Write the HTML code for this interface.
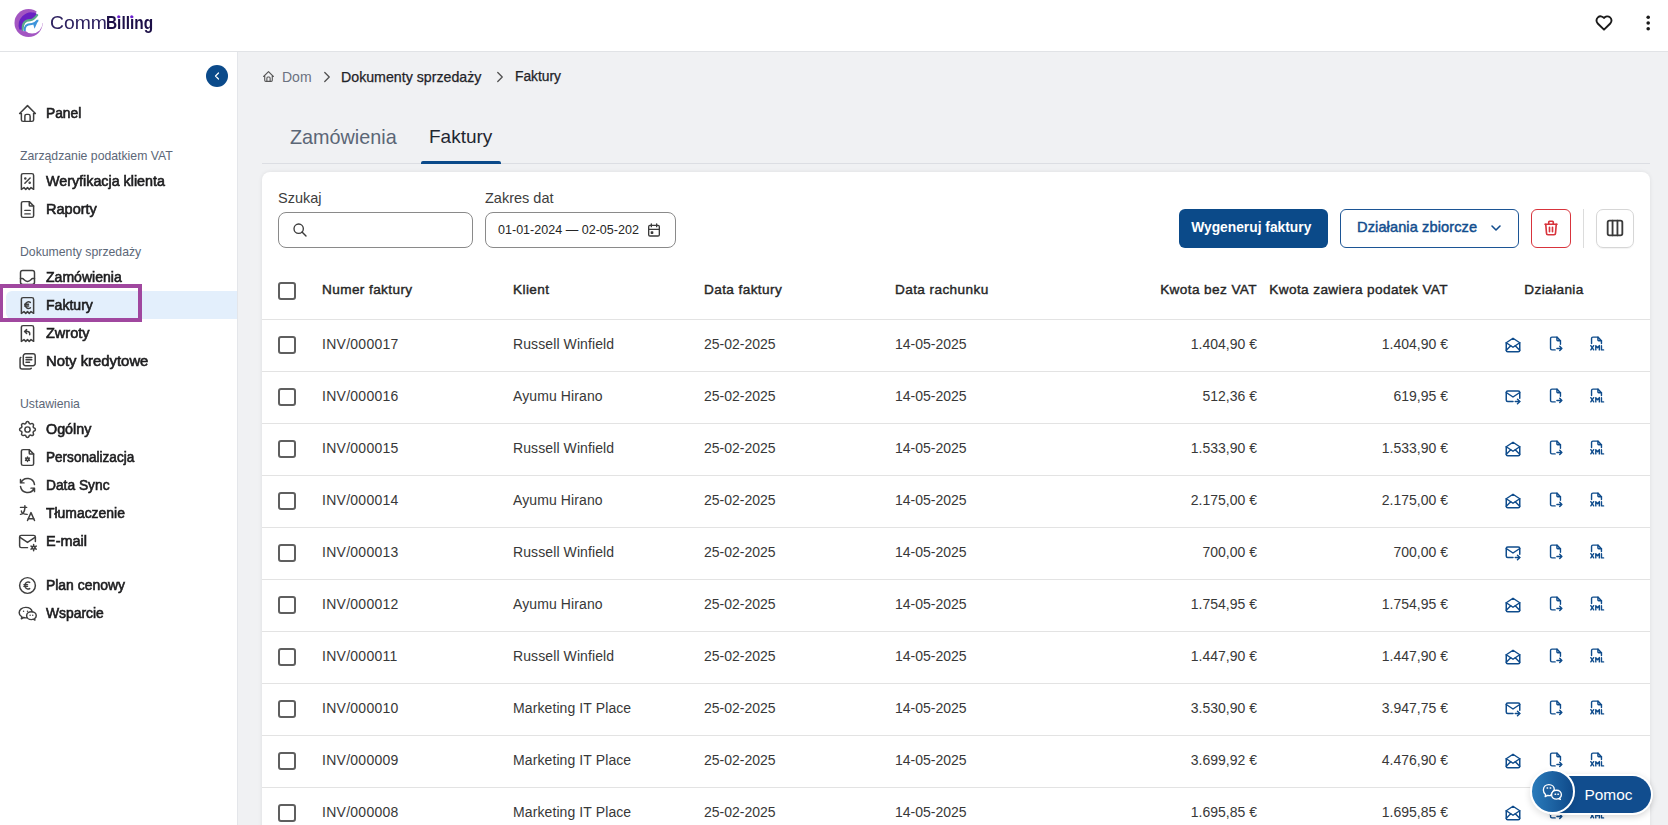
<!DOCTYPE html><html><head><meta charset="utf-8"><style>
*{box-sizing:border-box;margin:0;padding:0}
html,body{width:1668px;height:825px;overflow:hidden}
body{background:#f0f1f3;font-family:"Liberation Sans",sans-serif;position:relative;color:#1f2937}
.a{position:absolute;white-space:nowrap}
svg{display:block;position:absolute}
.nav{left:45.8px;font-size:14px;color:#1d1d1f;-webkit-text-stroke:0.6px #1d1d1f;line-height:16px;height:16px;transform-origin:0 50%}
.sec{left:20px;font-size:12.25px;color:#5c6778;line-height:14px;height:14px}
.th{font-size:13.6px;letter-spacing:0.4px;color:#262626;-webkit-text-stroke:0.4px #262626;line-height:16px;top:282px}
.td{font-size:14px;color:#383838;line-height:16px}
.cb{width:18px;height:18px;border:2px solid #5f5f5f;border-radius:3px;left:278px}
.sep{left:262px;width:1388px;height:1px;background:#e3e3e3}
</style></head><body>
<div class="a" style="left:0;top:0;width:1668px;height:51px;background:#fff"></div>
<div class="a" style="left:0;top:51px;width:1668px;height:1px;background:#e1e3e6"></div>
<svg style="left:10px;top:5px" width="38" height="36" viewBox="0 0 871 825">
<defs><mask id="m1" maskUnits="userSpaceOnUse" x="0" y="0" width="871" height="825"><circle cx="425" cy="412" r="322" fill="#fff"/><circle cx="507" cy="414" r="238" fill="#000"/><polygon points="507,414 610,150 680,-30 900,-30 900,414" fill="#000"/></mask></defs>
<rect width="871" height="825" fill="#a356c2" mask="url(#m1)"/>
<path d="M598,188 A295,295 0 0,0 215,560 L295,570 C285,420 330,350 470,345 C530,342 570,300 622,232 Z" fill="#6a21c3"/>
<path d="M295,570 C285,420 330,350 470,345 C530,342 570,300 622,232" fill="none" stroke="#5ba98c" stroke-width="52" stroke-linecap="round"/>
<path d="M338,600 C330,480 370,440 500,435 C550,432 590,405 640,350" fill="none" stroke="#fff" stroke-width="60"/>
<polygon points="520,425 672,322 558,560" fill="#fff"/>
<path d="M338,600 C330,480 370,440 500,435 C550,432 590,405 640,350" fill="none" stroke="#3e95da" stroke-width="46"/>
<polygon points="530,432 658,335 562,545" fill="#3e95da"/>
</svg>
<div class="a" style="left:50px;top:12px;font-size:17.6px;line-height:22px;color:#2e2260;transform-origin:0 0;transform:scaleX(1.1)">Comm</div>
<div class="a" style="left:105.6px;top:12px;font-size:17.6px;line-height:22px;color:#1c0f47;font-weight:bold;transform-origin:0 0;transform:scaleX(0.875)">Billing</div>
<svg style="left:112px;top:12px" width="26" height="9" viewBox="112 12 26 9"><rect x="117.3" y="15.2" width="2.9" height="3" fill="#fff"/><rect x="130.3" y="15.2" width="2.9" height="3" fill="#fff"/><circle cx="118.7" cy="16.8" r="1.55" fill="#6a1fd0"/><circle cx="131.7" cy="16.8" r="1.55" fill="#6a1fd0"/></svg>
<svg style="left:1594px;top:12.7px" width="20" height="20" viewBox="0 0 24 24" fill="none" stroke="#1a1a1a" stroke-width="2.3" stroke-linecap="round" stroke-linejoin="round"><path d="M19.5 12.572l-7.5 7.428-7.5-7.428a5 5 0 1 1 7.5-6.566 5 5 0 1 1 7.5 6.572"/></svg>
<svg style="left:1640px;top:10px" width="16" height="26" viewBox="1640 10 16 26"><circle cx="1648.2" cy="17.2" r="1.8" fill="#1a1a1a"/><circle cx="1648.2" cy="23" r="1.8" fill="#1a1a1a"/><circle cx="1648.2" cy="28.8" r="1.8" fill="#1a1a1a"/></svg>
<div class="a" style="left:0;top:52px;width:237px;height:773px;background:#fff"></div>
<div class="a" style="left:237px;top:52px;width:1px;height:773px;background:#e4e6ea"></div>
<div class="a" style="left:206px;top:65px;width:22px;height:22px;border-radius:11px;background:#0b4a8a"></div>
<svg style="left:211px;top:70px" width="12" height="12" viewBox="0 0 24 24" fill="none" stroke="#fff" stroke-width="2.4" stroke-linecap="round" stroke-linejoin="round"><path d="M15 6l-6 6 6 6"/></svg>
<div class="a" style="left:6px;top:290.6px;width:231px;height:28.6px;background:#e3effc;border-radius:6px 0 0 6px"></div>
<div class="a nav" style="top:104.7px;transform:scaleX(0.985)">Panel</div>
<svg style="left:17px;top:102.5px" width="21" height="21" viewBox="0 0 24 24" fill="none" stroke="#3f3f3f" stroke-width="1.7" stroke-linecap="round" stroke-linejoin="round"><path d="M5 12H3l9-9 9 9h-2"/><path d="M5 12v7a2 2 0 0 0 2 2h10a2 2 0 0 0 2-2v-7"/><path d="M9 21v-6a2 2 0 0 1 2-2h2a2 2 0 0 1 2 2v6"/></svg>
<div class="a sec" style="top:149px">Zarządzanie podatkiem VAT</div>
<div class="a nav" style="top:172.7px;transform:scaleX(1.021)">Weryfikacja klienta</div>
<svg style="left:17px;top:170.5px" width="21" height="21" viewBox="0 0 24 24" fill="none" stroke="#3f3f3f" stroke-width="1.7" stroke-linecap="round" stroke-linejoin="round"><path d="M5 21V5a2 2 0 0 1 2-2h10a2 2 0 0 1 2 2v16l-3-2-2 2-2-2-2 2-2-2-3 2"/><path d="M9 14l6-6"/><circle cx="9.5" cy="8.5" r=".6" fill="currentColor"/><circle cx="14.5" cy="13.5" r=".6"/></svg>
<div class="a nav" style="top:200.7px;transform:scaleX(1.037)">Raporty</div>
<svg style="left:17px;top:198.5px" width="21" height="21" viewBox="0 0 24 24" fill="none" stroke="#3f3f3f" stroke-width="1.7" stroke-linecap="round" stroke-linejoin="round"><path d="M14 3v4a1 1 0 0 0 1 1h4"/><path d="M17 21H7a2 2 0 0 1-2-2V5a2 2 0 0 1 2-2h7l5 5v11a2 2 0 0 1-2 2z"/><path d="M9 17h6"/><path d="M9 13h6"/></svg>
<div class="a sec" style="top:245px">Dokumenty sprzedaży</div>
<div class="a nav" style="top:268.7px;transform:scaleX(1.003)">Zamówienia</div>
<svg style="left:17px;top:266.5px" width="21" height="21" viewBox="0 0 24 24" fill="none" stroke="#3f3f3f" stroke-width="1.7" stroke-linecap="round" stroke-linejoin="round"><path d="M4 6.5a2.5 2.5 0 0 1 2.5-2.5h11a2.5 2.5 0 0 1 2.5 2.5v11a2.5 2.5 0 0 1-2.5 2.5h-11a2.5 2.5 0 0 1-2.5-2.5z"/><path d="M4 13.2h2.2c1.6 0 2 3.3 5.8 3.3s4.2-3.3 5.8-3.3H20"/></svg>
<div class="a nav" style="top:296.7px;transform:scaleX(1.004)">Faktury</div>
<svg style="left:17px;top:294.5px" width="21" height="21" viewBox="0 0 24 24" fill="none" stroke="#3f3f3f" stroke-width="1.7" stroke-linecap="round" stroke-linejoin="round"><path d="M5 21V5a2 2 0 0 1 2-2h10a2 2 0 0 1 2 2v16l-3-2-2 2-2-2-2 2-2-2-3 2"/><path d="M15.3 8.4a3.7 3.7 0 1 0 0 6.2"/><path d="M8.8 10.6h4.4M8.8 12.6h4.4"/></svg>
<div class="a nav" style="top:324.7px;transform:scaleX(1.036)">Zwroty</div>
<svg style="left:17px;top:322.5px" width="21" height="21" viewBox="0 0 24 24" fill="none" stroke="#3f3f3f" stroke-width="1.7" stroke-linecap="round" stroke-linejoin="round"><path d="M5 21V5a2 2 0 0 1 2-2h10a2 2 0 0 1 2 2v16l-3-2-2 2-2-2-2 2-2-2-3 2"/><path d="M14.5 13.5V12a2.2 2.2 0 0 0-2.2-2.2H9m2-2.2L8.6 9.8l2.4 2.2"/></svg>
<div class="a nav" style="top:352.7px;transform:scaleX(1.061)">Noty kredytowe</div>
<svg style="left:17px;top:350.5px" width="21" height="21" viewBox="0 0 24 24" fill="none" stroke="#3f3f3f" stroke-width="1.7" stroke-linecap="round" stroke-linejoin="round"><path d="M7.2 5.7a2.5 2.5 0 0 1 2.5-2.5h8.6a2.5 2.5 0 0 1 2.5 2.5v8.6a2.5 2.5 0 0 1-2.5 2.5H9.7a2.5 2.5 0 0 1-2.5-2.5z"/><path d="M4.3 7.4C3.7 7.8 3.5 8.3 3.5 9v9.3a2.3 2.3 0 0 0 2.3 2.3h8.8c.8 0 1.3-.3 1.7-.8"/><path d="M10.3 7.4h6.6M10.3 10.1h6.6M10.3 12.8h4"/></svg>
<div class="a sec" style="top:397px">Ustawienia</div>
<div class="a nav" style="top:420.7px;transform:scaleX(1.022)">Ogólny</div>
<svg style="left:17px;top:418.5px" width="21" height="21" viewBox="0 0 24 24" fill="none" stroke="#3f3f3f" stroke-width="1.7" stroke-linecap="round" stroke-linejoin="round"><path d="M10.3 4.3c.4-1.8 3-1.8 3.4 0a1.7 1.7 0 0 0 2.6 1.1c1.5-.9 3.3.8 2.4 2.4a1.7 1.7 0 0 0 1 2.5c1.8.4 1.8 3 0 3.4a1.7 1.7 0 0 0-1 2.6c.9 1.5-.9 3.3-2.4 2.4a1.7 1.7 0 0 0-2.6 1c-.4 1.8-3 1.8-3.4 0a1.7 1.7 0 0 0-2.5-1c-1.6.9-3.3-.9-2.4-2.4a1.7 1.7 0 0 0-1.1-2.6c-1.8-.4-1.8-3 0-3.4a1.7 1.7 0 0 0 1.1-2.5c-.9-1.6.8-3.3 2.4-2.4 1 .6 2.3.1 2.5-1.1z"/><circle cx="12" cy="12" r="3"/></svg>
<div class="a nav" style="top:448.7px;transform:scaleX(0.969)">Personalizacja</div>
<svg style="left:17px;top:446.5px" width="21" height="21" viewBox="0 0 24 24" fill="none" stroke="#3f3f3f" stroke-width="1.7" stroke-linecap="round" stroke-linejoin="round"><path d="M14 3v4a1 1 0 0 0 1 1h4"/><path d="M17 21H7a2 2 0 0 1-2-2V5a2 2 0 0 1 2-2h7l5 5v11a2 2 0 0 1-2 2z"/><circle cx="12" cy="14" r="1.5"/><path d="M12 11.5v1M12 15.5v1M14.2 12.7l-.9.5M10.7 14.8l-.9.5M9.8 12.7l.9.5M13.3 14.8l.9.5"/></svg>
<div class="a nav" style="top:476.7px;transform:scaleX(0.984)">Data Sync</div>
<svg style="left:17px;top:474.5px" width="21" height="21" viewBox="0 0 24 24" fill="none" stroke="#3f3f3f" stroke-width="1.7" stroke-linecap="round" stroke-linejoin="round"><path d="M20 11A8.1 8.1 0 0 0 4.5 9M4 5v4h4"/><path d="M4 13a8.1 8.1 0 0 0 15.5 2m.5 4v-4h-4"/></svg>
<div class="a nav" style="top:504.7px;transform:scaleX(0.994)">Tłumaczenie</div>
<svg style="left:17px;top:502.5px" width="21" height="21" viewBox="0 0 24 24" fill="none" stroke="#3f3f3f" stroke-width="1.7" stroke-linecap="round" stroke-linejoin="round"><path d="M4 5h7"/><path d="M9 3v2c0 4.4-2.2 8-5 8"/><path d="M5 9c0 2.1 2.9 3.9 6.6 4"/><path d="M12 20l4-9 4 9"/><path d="M19.1 18h-6.2"/></svg>
<div class="a nav" style="top:532.7px;transform:scaleX(1.034)">E-mail</div>
<svg style="left:17px;top:530.5px" width="21" height="21" viewBox="0 0 24 24" fill="none" stroke="#3f3f3f" stroke-width="1.7" stroke-linecap="round" stroke-linejoin="round"><path d="M12 19H5a2 2 0 0 1-2-2V7a2 2 0 0 1 2-2h14a2 2 0 0 1 2 2v5"/><path d="M3 7l9 6 9-6"/><circle cx="19" cy="19" r="1.5"/><path d="M19 15.5v1.5M19 21v1.5M22 17.2l-1.3.8M17.3 20l-1.3.8M16 17.2l1.3.8M20.7 20l1.3.8"/></svg>
<div class="a nav" style="top:576.7px;transform:scaleX(0.994)">Plan cenowy</div>
<svg style="left:17px;top:574.5px" width="21" height="21" viewBox="0 0 24 24" fill="none" stroke="#3f3f3f" stroke-width="1.7" stroke-linecap="round" stroke-linejoin="round"><circle cx="12" cy="12" r="9"/><path d="M14.5 8.5a3.5 3.5 0 0 0-5 1.5 5 5 0 0 0 0 4 3.5 3.5 0 0 0 5 1.5"/><path d="M8 11h4M8 13h4"/></svg>
<div class="a nav" style="top:604.7px;transform:scaleX(0.99)">Wsparcie</div>
<svg style="left:17px;top:602.5px" width="21" height="21" viewBox="0 0 24 24" fill="none" stroke="#3f3f3f" stroke-width="1.7" stroke-linecap="round" stroke-linejoin="round"><path d="M16.5 10c3 0 5.5 2 5.5 4.5 0 1.5-.8 2.6-2 3.5l.5 1.5-1.8-1a6.4 6.4 0 0 1-2.2.5c-3 0-5.5-2-5.5-4.5s2.5-4.5 5.5-4.5z"/><path d="M11.5 16.8c-.5.1-1 .2-1.5.2-.8 0-1.6-.1-2.3-.4L5 18l.6-2.1C3.7 14.7 2.5 12.9 2.5 11c0-3.3 3.4-6 7.5-6 3.7 0 6.8 2.2 7.4 5"/><path d="M7.5 9.5v.01M12 9.5v.01M15 14v.01M18 14v.01"/></svg>
<div class="a" style="left:-0.6px;top:284.2px;width:142.5px;height:37.6px;border:4.8px solid #a0479f"></div>
<svg style="left:262px;top:70px" width="13" height="13" viewBox="0 0 24 24" fill="none" stroke="#555" stroke-width="2" stroke-linecap="round" stroke-linejoin="round"><path d="M5 12H3l9-9 9 9h-2"/><path d="M5 12v7a2 2 0 0 0 2 2h10a2 2 0 0 0 2-2v-7"/><path d="M9 21v-6a2 2 0 0 1 2-2h2a2 2 0 0 1 2 2v6"/></svg>
<div class="a" style="left:282px;top:69px;font-size:14px;line-height:16px;color:#6b7280">Dom</div>
<svg style="left:317.5px;top:67.5px" width="18" height="18" viewBox="0 0 24 24" fill="none" stroke="#505050" stroke-width="1.75" stroke-linecap="round" stroke-linejoin="round"><path d="M9 6l6 6-6 6"/></svg>
<div class="a" style="left:341px;top:69px;font-size:14.2px;line-height:16px;color:#1f2328;-webkit-text-stroke:0.25px #1f2328">Dokumenty sprzedaży</div>
<svg style="left:490.5px;top:67.5px" width="18" height="18" viewBox="0 0 24 24" fill="none" stroke="#505050" stroke-width="1.75" stroke-linecap="round" stroke-linejoin="round"><path d="M9 6l6 6-6 6"/></svg>
<div class="a" style="left:515px;top:69px;font-size:13.8px;line-height:16px;color:#1f2328;-webkit-text-stroke:0.25px #1f2328">Faktury</div>
<div class="a" style="left:290px;top:125px;font-size:19.8px;line-height:24px;color:#5b6676">Zamówienia</div>
<div class="a" style="left:429px;top:125px;font-size:19px;line-height:24px;color:#1f2630">Faktury</div>
<div class="a" style="left:262px;top:163px;width:1388px;height:1px;background:#dcdee3"></div>
<div class="a" style="left:421px;top:161px;width:80px;height:3px;background:#0b4a8a;border-radius:2px 2px 0 0"></div>
<div class="a" style="left:262px;top:172px;width:1388px;height:700px;background:#fff;border-radius:8px;box-shadow:0 0 4px rgba(0,0,0,0.08)"></div>
<div class="a" style="left:278px;top:190px;font-size:14.5px;line-height:16px;color:#3d3d3d">Szukaj</div>
<div class="a" style="left:278px;top:212px;width:195px;height:36px;border:1px solid #8a8a8a;border-radius:8px"></div>
<svg style="left:292px;top:222px" width="16" height="16" viewBox="0 0 24 24" fill="none" stroke="#3a3a3a" stroke-width="2" stroke-linecap="round" stroke-linejoin="round"><circle cx="10" cy="10" r="7"/><path d="M21 21l-6-6"/></svg>
<div class="a" style="left:485px;top:190px;font-size:14.5px;line-height:16px;color:#3d3d3d">Zakres dat</div>
<div class="a" style="left:485px;top:212px;width:191px;height:36px;border:1px solid #8a8a8a;border-radius:8px"></div>
<div class="a" style="left:498px;top:222px;font-size:12.55px;line-height:16px;color:#262626">01-01-2024 — 02-05-202</div>
<svg style="left:646px;top:222px" width="16" height="16" viewBox="0 0 24 24" fill="none" stroke="#3a3a3a" stroke-width="2" stroke-linecap="round" stroke-linejoin="round"><path d="M4 7a2 2 0 0 1 2-2h12a2 2 0 0 1 2 2v12a2 2 0 0 1-2 2H6a2 2 0 0 1-2-2z"/><path d="M16 3v4M8 3v4M4 11h16"/><path d="M8 15h2v2H8z"/></svg>
<div class="a" style="left:1179px;top:209px;width:149px;height:39px;background:#0b4a89;border-radius:6px"></div>
<div class="a" style="left:1191.2px;top:219px;font-size:13.8px;font-weight:bold;line-height:18px;color:#fff">Wygeneruj faktury</div>
<div class="a" style="left:1340px;top:209px;width:179px;height:39px;border:1.5px solid #1c5595;border-radius:6px"></div>
<div class="a" style="left:1357px;top:218px;font-size:14.6px;line-height:18px;color:#124d8e;-webkit-text-stroke:0.45px #124d8e;letter-spacing:0.1px">Działania zbiorcze</div>
<svg style="left:1488px;top:220px" width="16" height="16" viewBox="0 0 24 24" fill="none" stroke="#124d8e" stroke-width="2.4" stroke-linecap="round" stroke-linejoin="round"><path d="M6 9l6 6 6-6"/></svg>
<div class="a" style="left:1531px;top:209px;width:40px;height:39px;border:1px solid #d8343c;border-radius:6px"></div>
<svg style="left:1542px;top:219px" width="18" height="18" viewBox="0 0 24 24" fill="none" stroke="#d8343c" stroke-width="2.2" stroke-linecap="round" stroke-linejoin="round"><path d="M4 7h16"/><path d="M10 11v6M14 11v6"/><path d="M5 7l1 12a2 2 0 0 0 2 2h8a2 2 0 0 0 2-2l1-12"/><path d="M9 7V4a1 1 0 0 1 1-1h4a1 1 0 0 1 1 1v3"/></svg>
<div class="a" style="left:1583px;top:209px;width:1px;height:39px;background:#dcdcdc"></div>
<div class="a" style="left:1596px;top:209px;width:38px;height:39px;border:1px solid #d6d6d6;border-radius:7px;box-shadow:0 1px 1px rgba(0,0,0,.05)"></div>
<svg style="left:1604px;top:217px" width="22" height="22" viewBox="0 0 24 24" fill="none" stroke="#3a3a3a" stroke-width="2" stroke-linecap="round" stroke-linejoin="round"><path d="M4 6a2 2 0 0 1 2-2h12a2 2 0 0 1 2 2v12a2 2 0 0 1-2 2H6a2 2 0 0 1-2-2z"/><path d="M9.33 4v16M14.67 4v16"/></svg>
<div class="a cb" style="top:282px"></div>
<div class="a th" style="left:322px">Numer faktury</div>
<div class="a th" style="left:513px">Klient</div>
<div class="a th" style="left:704px">Data faktury</div>
<div class="a th" style="left:895px">Data rachunku</div>
<div class="a th" style="left:1057px;width:200px;text-align:right">Kwota bez VAT</div>
<div class="a th" style="left:1248px;width:200px;text-align:right">Kwota zawiera podatek VAT</div>
<div class="a th" style="left:1454px;width:200px;text-align:center">Działania</div>
<div class="a sep" style="top:319px"></div>
<div class="a cb" style="top:336px"></div>
<div class="a td" style="left:322px;top:336px;letter-spacing:0.27px">INV/000017</div>
<div class="a td" style="left:513px;top:336px;letter-spacing:0.1px">Russell Winfield</div>
<div class="a td" style="left:704px;top:336px">25-02-2025</div>
<div class="a td" style="left:895px;top:336px">14-05-2025</div>
<div class="a td" style="left:1057px;width:200px;text-align:right;top:336px">1.404,90 €</div>
<div class="a td" style="left:1248px;width:200px;text-align:right;top:336px">1.404,90 €</div>
<svg style="left:1504px;top:335.5px" width="18" height="18" viewBox="0 0 24 24" fill="none" stroke="#0f4c8c" stroke-width="2" stroke-linecap="round" stroke-linejoin="round"><path d="M3 9l9 6 9-6-9-6-9 6"/><path d="M21 9v10a2 2 0 0 1-2 2H5a2 2 0 0 1-2-2V9"/><path d="M3 19l6-6"/><path d="M15 13l6 6"/></svg>
<svg style="left:1546.6px;top:335px" width="17" height="17" viewBox="0 0 24 24" fill="none" stroke="#0f4c8c" stroke-width="2" stroke-linecap="round" stroke-linejoin="round"><path d="M14 3v4a1 1 0 0 0 1 1h4"/><path d="M11.5 21H7a2 2 0 0 1-2-2V5a2 2 0 0 1 2-2h7l5 5v5m-5 6h7m-3-3l3 3-3 3"/></svg>
<svg style="left:1587.6px;top:335px" width="17" height="17" viewBox="0 0 24 24" fill="none" stroke="#0f4c8c" stroke-width="2" stroke-linecap="round" stroke-linejoin="round"><path d="M14 3v4a1 1 0 0 0 1 1h4"/><path d="M5 12V5a2 2 0 0 1 2-2h7l5 5v4"/><path d="M4 15l4 6"/><path d="M4 21l4-6"/><path d="M19 15v6h3"/><path d="M11 21v-6l2.5 3 2.5-3v6"/></svg>
<div class="a sep" style="top:371px"></div>
<div class="a cb" style="top:388px"></div>
<div class="a td" style="left:322px;top:388px;letter-spacing:0.27px">INV/000016</div>
<div class="a td" style="left:513px;top:388px;letter-spacing:0.1px">Ayumu Hirano</div>
<div class="a td" style="left:704px;top:388px">25-02-2025</div>
<div class="a td" style="left:895px;top:388px">14-05-2025</div>
<div class="a td" style="left:1057px;width:200px;text-align:right;top:388px">512,36 €</div>
<div class="a td" style="left:1248px;width:200px;text-align:right;top:388px">619,95 €</div>
<svg style="left:1504px;top:387.5px" width="18" height="18" viewBox="0 0 24 24" fill="none" stroke="#0f4c8c" stroke-width="2" stroke-linecap="round" stroke-linejoin="round"><path d="M12 18H5a2 2 0 0 1-2-2V6a2 2 0 0 1 2-2h14a2 2 0 0 1 2 2v7.5"/><path d="M3 6l9 6 9-6"/><path d="M15 18h6"/><path d="M18 15l3 3-3 3"/></svg>
<svg style="left:1546.6px;top:387px" width="17" height="17" viewBox="0 0 24 24" fill="none" stroke="#0f4c8c" stroke-width="2" stroke-linecap="round" stroke-linejoin="round"><path d="M14 3v4a1 1 0 0 0 1 1h4"/><path d="M11.5 21H7a2 2 0 0 1-2-2V5a2 2 0 0 1 2-2h7l5 5v5m-5 6h7m-3-3l3 3-3 3"/></svg>
<svg style="left:1587.6px;top:387px" width="17" height="17" viewBox="0 0 24 24" fill="none" stroke="#0f4c8c" stroke-width="2" stroke-linecap="round" stroke-linejoin="round"><path d="M14 3v4a1 1 0 0 0 1 1h4"/><path d="M5 12V5a2 2 0 0 1 2-2h7l5 5v4"/><path d="M4 15l4 6"/><path d="M4 21l4-6"/><path d="M19 15v6h3"/><path d="M11 21v-6l2.5 3 2.5-3v6"/></svg>
<div class="a sep" style="top:423px"></div>
<div class="a cb" style="top:440px"></div>
<div class="a td" style="left:322px;top:440px;letter-spacing:0.27px">INV/000015</div>
<div class="a td" style="left:513px;top:440px;letter-spacing:0.1px">Russell Winfield</div>
<div class="a td" style="left:704px;top:440px">25-02-2025</div>
<div class="a td" style="left:895px;top:440px">14-05-2025</div>
<div class="a td" style="left:1057px;width:200px;text-align:right;top:440px">1.533,90 €</div>
<div class="a td" style="left:1248px;width:200px;text-align:right;top:440px">1.533,90 €</div>
<svg style="left:1504px;top:439.5px" width="18" height="18" viewBox="0 0 24 24" fill="none" stroke="#0f4c8c" stroke-width="2" stroke-linecap="round" stroke-linejoin="round"><path d="M3 9l9 6 9-6-9-6-9 6"/><path d="M21 9v10a2 2 0 0 1-2 2H5a2 2 0 0 1-2-2V9"/><path d="M3 19l6-6"/><path d="M15 13l6 6"/></svg>
<svg style="left:1546.6px;top:439px" width="17" height="17" viewBox="0 0 24 24" fill="none" stroke="#0f4c8c" stroke-width="2" stroke-linecap="round" stroke-linejoin="round"><path d="M14 3v4a1 1 0 0 0 1 1h4"/><path d="M11.5 21H7a2 2 0 0 1-2-2V5a2 2 0 0 1 2-2h7l5 5v5m-5 6h7m-3-3l3 3-3 3"/></svg>
<svg style="left:1587.6px;top:439px" width="17" height="17" viewBox="0 0 24 24" fill="none" stroke="#0f4c8c" stroke-width="2" stroke-linecap="round" stroke-linejoin="round"><path d="M14 3v4a1 1 0 0 0 1 1h4"/><path d="M5 12V5a2 2 0 0 1 2-2h7l5 5v4"/><path d="M4 15l4 6"/><path d="M4 21l4-6"/><path d="M19 15v6h3"/><path d="M11 21v-6l2.5 3 2.5-3v6"/></svg>
<div class="a sep" style="top:475px"></div>
<div class="a cb" style="top:492px"></div>
<div class="a td" style="left:322px;top:492px;letter-spacing:0.27px">INV/000014</div>
<div class="a td" style="left:513px;top:492px;letter-spacing:0.1px">Ayumu Hirano</div>
<div class="a td" style="left:704px;top:492px">25-02-2025</div>
<div class="a td" style="left:895px;top:492px">14-05-2025</div>
<div class="a td" style="left:1057px;width:200px;text-align:right;top:492px">2.175,00 €</div>
<div class="a td" style="left:1248px;width:200px;text-align:right;top:492px">2.175,00 €</div>
<svg style="left:1504px;top:491.5px" width="18" height="18" viewBox="0 0 24 24" fill="none" stroke="#0f4c8c" stroke-width="2" stroke-linecap="round" stroke-linejoin="round"><path d="M3 9l9 6 9-6-9-6-9 6"/><path d="M21 9v10a2 2 0 0 1-2 2H5a2 2 0 0 1-2-2V9"/><path d="M3 19l6-6"/><path d="M15 13l6 6"/></svg>
<svg style="left:1546.6px;top:491px" width="17" height="17" viewBox="0 0 24 24" fill="none" stroke="#0f4c8c" stroke-width="2" stroke-linecap="round" stroke-linejoin="round"><path d="M14 3v4a1 1 0 0 0 1 1h4"/><path d="M11.5 21H7a2 2 0 0 1-2-2V5a2 2 0 0 1 2-2h7l5 5v5m-5 6h7m-3-3l3 3-3 3"/></svg>
<svg style="left:1587.6px;top:491px" width="17" height="17" viewBox="0 0 24 24" fill="none" stroke="#0f4c8c" stroke-width="2" stroke-linecap="round" stroke-linejoin="round"><path d="M14 3v4a1 1 0 0 0 1 1h4"/><path d="M5 12V5a2 2 0 0 1 2-2h7l5 5v4"/><path d="M4 15l4 6"/><path d="M4 21l4-6"/><path d="M19 15v6h3"/><path d="M11 21v-6l2.5 3 2.5-3v6"/></svg>
<div class="a sep" style="top:527px"></div>
<div class="a cb" style="top:544px"></div>
<div class="a td" style="left:322px;top:544px;letter-spacing:0.27px">INV/000013</div>
<div class="a td" style="left:513px;top:544px;letter-spacing:0.1px">Russell Winfield</div>
<div class="a td" style="left:704px;top:544px">25-02-2025</div>
<div class="a td" style="left:895px;top:544px">14-05-2025</div>
<div class="a td" style="left:1057px;width:200px;text-align:right;top:544px">700,00 €</div>
<div class="a td" style="left:1248px;width:200px;text-align:right;top:544px">700,00 €</div>
<svg style="left:1504px;top:543.5px" width="18" height="18" viewBox="0 0 24 24" fill="none" stroke="#0f4c8c" stroke-width="2" stroke-linecap="round" stroke-linejoin="round"><path d="M12 18H5a2 2 0 0 1-2-2V6a2 2 0 0 1 2-2h14a2 2 0 0 1 2 2v7.5"/><path d="M3 6l9 6 9-6"/><path d="M15 18h6"/><path d="M18 15l3 3-3 3"/></svg>
<svg style="left:1546.6px;top:543px" width="17" height="17" viewBox="0 0 24 24" fill="none" stroke="#0f4c8c" stroke-width="2" stroke-linecap="round" stroke-linejoin="round"><path d="M14 3v4a1 1 0 0 0 1 1h4"/><path d="M11.5 21H7a2 2 0 0 1-2-2V5a2 2 0 0 1 2-2h7l5 5v5m-5 6h7m-3-3l3 3-3 3"/></svg>
<svg style="left:1587.6px;top:543px" width="17" height="17" viewBox="0 0 24 24" fill="none" stroke="#0f4c8c" stroke-width="2" stroke-linecap="round" stroke-linejoin="round"><path d="M14 3v4a1 1 0 0 0 1 1h4"/><path d="M5 12V5a2 2 0 0 1 2-2h7l5 5v4"/><path d="M4 15l4 6"/><path d="M4 21l4-6"/><path d="M19 15v6h3"/><path d="M11 21v-6l2.5 3 2.5-3v6"/></svg>
<div class="a sep" style="top:579px"></div>
<div class="a cb" style="top:596px"></div>
<div class="a td" style="left:322px;top:596px;letter-spacing:0.27px">INV/000012</div>
<div class="a td" style="left:513px;top:596px;letter-spacing:0.1px">Ayumu Hirano</div>
<div class="a td" style="left:704px;top:596px">25-02-2025</div>
<div class="a td" style="left:895px;top:596px">14-05-2025</div>
<div class="a td" style="left:1057px;width:200px;text-align:right;top:596px">1.754,95 €</div>
<div class="a td" style="left:1248px;width:200px;text-align:right;top:596px">1.754,95 €</div>
<svg style="left:1504px;top:595.5px" width="18" height="18" viewBox="0 0 24 24" fill="none" stroke="#0f4c8c" stroke-width="2" stroke-linecap="round" stroke-linejoin="round"><path d="M3 9l9 6 9-6-9-6-9 6"/><path d="M21 9v10a2 2 0 0 1-2 2H5a2 2 0 0 1-2-2V9"/><path d="M3 19l6-6"/><path d="M15 13l6 6"/></svg>
<svg style="left:1546.6px;top:595px" width="17" height="17" viewBox="0 0 24 24" fill="none" stroke="#0f4c8c" stroke-width="2" stroke-linecap="round" stroke-linejoin="round"><path d="M14 3v4a1 1 0 0 0 1 1h4"/><path d="M11.5 21H7a2 2 0 0 1-2-2V5a2 2 0 0 1 2-2h7l5 5v5m-5 6h7m-3-3l3 3-3 3"/></svg>
<svg style="left:1587.6px;top:595px" width="17" height="17" viewBox="0 0 24 24" fill="none" stroke="#0f4c8c" stroke-width="2" stroke-linecap="round" stroke-linejoin="round"><path d="M14 3v4a1 1 0 0 0 1 1h4"/><path d="M5 12V5a2 2 0 0 1 2-2h7l5 5v4"/><path d="M4 15l4 6"/><path d="M4 21l4-6"/><path d="M19 15v6h3"/><path d="M11 21v-6l2.5 3 2.5-3v6"/></svg>
<div class="a sep" style="top:631px"></div>
<div class="a cb" style="top:648px"></div>
<div class="a td" style="left:322px;top:648px;letter-spacing:0.27px">INV/000011</div>
<div class="a td" style="left:513px;top:648px;letter-spacing:0.1px">Russell Winfield</div>
<div class="a td" style="left:704px;top:648px">25-02-2025</div>
<div class="a td" style="left:895px;top:648px">14-05-2025</div>
<div class="a td" style="left:1057px;width:200px;text-align:right;top:648px">1.447,90 €</div>
<div class="a td" style="left:1248px;width:200px;text-align:right;top:648px">1.447,90 €</div>
<svg style="left:1504px;top:647.5px" width="18" height="18" viewBox="0 0 24 24" fill="none" stroke="#0f4c8c" stroke-width="2" stroke-linecap="round" stroke-linejoin="round"><path d="M3 9l9 6 9-6-9-6-9 6"/><path d="M21 9v10a2 2 0 0 1-2 2H5a2 2 0 0 1-2-2V9"/><path d="M3 19l6-6"/><path d="M15 13l6 6"/></svg>
<svg style="left:1546.6px;top:647px" width="17" height="17" viewBox="0 0 24 24" fill="none" stroke="#0f4c8c" stroke-width="2" stroke-linecap="round" stroke-linejoin="round"><path d="M14 3v4a1 1 0 0 0 1 1h4"/><path d="M11.5 21H7a2 2 0 0 1-2-2V5a2 2 0 0 1 2-2h7l5 5v5m-5 6h7m-3-3l3 3-3 3"/></svg>
<svg style="left:1587.6px;top:647px" width="17" height="17" viewBox="0 0 24 24" fill="none" stroke="#0f4c8c" stroke-width="2" stroke-linecap="round" stroke-linejoin="round"><path d="M14 3v4a1 1 0 0 0 1 1h4"/><path d="M5 12V5a2 2 0 0 1 2-2h7l5 5v4"/><path d="M4 15l4 6"/><path d="M4 21l4-6"/><path d="M19 15v6h3"/><path d="M11 21v-6l2.5 3 2.5-3v6"/></svg>
<div class="a sep" style="top:683px"></div>
<div class="a cb" style="top:700px"></div>
<div class="a td" style="left:322px;top:700px;letter-spacing:0.27px">INV/000010</div>
<div class="a td" style="left:513px;top:700px;letter-spacing:0.1px">Marketing IT Place</div>
<div class="a td" style="left:704px;top:700px">25-02-2025</div>
<div class="a td" style="left:895px;top:700px">14-05-2025</div>
<div class="a td" style="left:1057px;width:200px;text-align:right;top:700px">3.530,90 €</div>
<div class="a td" style="left:1248px;width:200px;text-align:right;top:700px">3.947,75 €</div>
<svg style="left:1504px;top:699.5px" width="18" height="18" viewBox="0 0 24 24" fill="none" stroke="#0f4c8c" stroke-width="2" stroke-linecap="round" stroke-linejoin="round"><path d="M12 18H5a2 2 0 0 1-2-2V6a2 2 0 0 1 2-2h14a2 2 0 0 1 2 2v7.5"/><path d="M3 6l9 6 9-6"/><path d="M15 18h6"/><path d="M18 15l3 3-3 3"/></svg>
<svg style="left:1546.6px;top:699px" width="17" height="17" viewBox="0 0 24 24" fill="none" stroke="#0f4c8c" stroke-width="2" stroke-linecap="round" stroke-linejoin="round"><path d="M14 3v4a1 1 0 0 0 1 1h4"/><path d="M11.5 21H7a2 2 0 0 1-2-2V5a2 2 0 0 1 2-2h7l5 5v5m-5 6h7m-3-3l3 3-3 3"/></svg>
<svg style="left:1587.6px;top:699px" width="17" height="17" viewBox="0 0 24 24" fill="none" stroke="#0f4c8c" stroke-width="2" stroke-linecap="round" stroke-linejoin="round"><path d="M14 3v4a1 1 0 0 0 1 1h4"/><path d="M5 12V5a2 2 0 0 1 2-2h7l5 5v4"/><path d="M4 15l4 6"/><path d="M4 21l4-6"/><path d="M19 15v6h3"/><path d="M11 21v-6l2.5 3 2.5-3v6"/></svg>
<div class="a sep" style="top:735px"></div>
<div class="a cb" style="top:752px"></div>
<div class="a td" style="left:322px;top:752px;letter-spacing:0.27px">INV/000009</div>
<div class="a td" style="left:513px;top:752px;letter-spacing:0.1px">Marketing IT Place</div>
<div class="a td" style="left:704px;top:752px">25-02-2025</div>
<div class="a td" style="left:895px;top:752px">14-05-2025</div>
<div class="a td" style="left:1057px;width:200px;text-align:right;top:752px">3.699,92 €</div>
<div class="a td" style="left:1248px;width:200px;text-align:right;top:752px">4.476,90 €</div>
<svg style="left:1504px;top:751.5px" width="18" height="18" viewBox="0 0 24 24" fill="none" stroke="#0f4c8c" stroke-width="2" stroke-linecap="round" stroke-linejoin="round"><path d="M3 9l9 6 9-6-9-6-9 6"/><path d="M21 9v10a2 2 0 0 1-2 2H5a2 2 0 0 1-2-2V9"/><path d="M3 19l6-6"/><path d="M15 13l6 6"/></svg>
<svg style="left:1546.6px;top:751px" width="17" height="17" viewBox="0 0 24 24" fill="none" stroke="#0f4c8c" stroke-width="2" stroke-linecap="round" stroke-linejoin="round"><path d="M14 3v4a1 1 0 0 0 1 1h4"/><path d="M11.5 21H7a2 2 0 0 1-2-2V5a2 2 0 0 1 2-2h7l5 5v5m-5 6h7m-3-3l3 3-3 3"/></svg>
<svg style="left:1587.6px;top:751px" width="17" height="17" viewBox="0 0 24 24" fill="none" stroke="#0f4c8c" stroke-width="2" stroke-linecap="round" stroke-linejoin="round"><path d="M14 3v4a1 1 0 0 0 1 1h4"/><path d="M5 12V5a2 2 0 0 1 2-2h7l5 5v4"/><path d="M4 15l4 6"/><path d="M4 21l4-6"/><path d="M19 15v6h3"/><path d="M11 21v-6l2.5 3 2.5-3v6"/></svg>
<div class="a sep" style="top:787px"></div>
<div class="a cb" style="top:804px"></div>
<div class="a td" style="left:322px;top:804px;letter-spacing:0.27px">INV/000008</div>
<div class="a td" style="left:513px;top:804px;letter-spacing:0.1px">Marketing IT Place</div>
<div class="a td" style="left:704px;top:804px">25-02-2025</div>
<div class="a td" style="left:895px;top:804px">14-05-2025</div>
<div class="a td" style="left:1057px;width:200px;text-align:right;top:804px">1.695,85 €</div>
<div class="a td" style="left:1248px;width:200px;text-align:right;top:804px">1.695,85 €</div>
<svg style="left:1504px;top:803.5px" width="18" height="18" viewBox="0 0 24 24" fill="none" stroke="#0f4c8c" stroke-width="2" stroke-linecap="round" stroke-linejoin="round"><path d="M3 9l9 6 9-6-9-6-9 6"/><path d="M21 9v10a2 2 0 0 1-2 2H5a2 2 0 0 1-2-2V9"/><path d="M3 19l6-6"/><path d="M15 13l6 6"/></svg>
<svg style="left:1546.6px;top:803px" width="17" height="17" viewBox="0 0 24 24" fill="none" stroke="#0f4c8c" stroke-width="2" stroke-linecap="round" stroke-linejoin="round"><path d="M14 3v4a1 1 0 0 0 1 1h4"/><path d="M11.5 21H7a2 2 0 0 1-2-2V5a2 2 0 0 1 2-2h7l5 5v5m-5 6h7m-3-3l3 3-3 3"/></svg>
<svg style="left:1587.6px;top:803px" width="17" height="17" viewBox="0 0 24 24" fill="none" stroke="#0f4c8c" stroke-width="2" stroke-linecap="round" stroke-linejoin="round"><path d="M14 3v4a1 1 0 0 0 1 1h4"/><path d="M5 12V5a2 2 0 0 1 2-2h7l5 5v4"/><path d="M4 15l4 6"/><path d="M4 21l4-6"/><path d="M19 15v6h3"/><path d="M11 21v-6l2.5 3 2.5-3v6"/></svg>
<div class="a sep" style="top:839px"></div>
<div class="a" style="left:1550px;top:773.8px;width:102.6px;height:41px;border-radius:0 21px 21px 0;background:#114d8e;border:2px solid #fff;border-left:0;box-shadow:0 2px 6px rgba(0,0,0,.16)"></div>
<div class="a" style="left:1584.5px;top:786px;font-size:15.4px;line-height:18px;color:#fff">Pomoc</div>
<div class="a" style="left:1530px;top:769.2px;width:45px;height:45px;border-radius:23px;background:linear-gradient(90deg,#2a7bbb,#0f4a8a);border:2px solid #fff;box-shadow:-1px 3px 6px rgba(0,0,0,.10)"></div>
<svg style="left:1536px;top:774px" width="36" height="34" viewBox="0 0 36 34" fill="none" stroke="#fff" stroke-width="1.35" stroke-linecap="round" stroke-linejoin="round">
<path d="M9.2 22.6 L9.6 20.6 C8 19.5 7.4 17.9 7.4 16 C7.4 12.7 9.9 10.6 12.9 10.6 C15.9 10.6 18.3 12.7 18.3 15.6 L16 19 L14.5 21.6 C13.3 21.9 12.3 21.5 11.6 21.4 Z" fill="#1c5f9f"/>
<path d="M24.3 25.4 L23.6 24 C24.8 23.1 25.4 22 25.4 20.7 C25.4 18.1 23.3 16.2 20.5 16.2 C17.7 16.2 15.6 18.1 15.6 20.7 C15.6 23.3 17.7 25.1 20.5 25.1 C21.4 25.1 22.1 24.9 22.7 24.7 Z" fill="#1b5b9a"/>
<path d="M11.1 14.1h.5M14.2 14.1h.5M19.1 20.3h.5M21.9 20.3h.5" stroke-width="1.5"/>
</svg>
</body></html>
